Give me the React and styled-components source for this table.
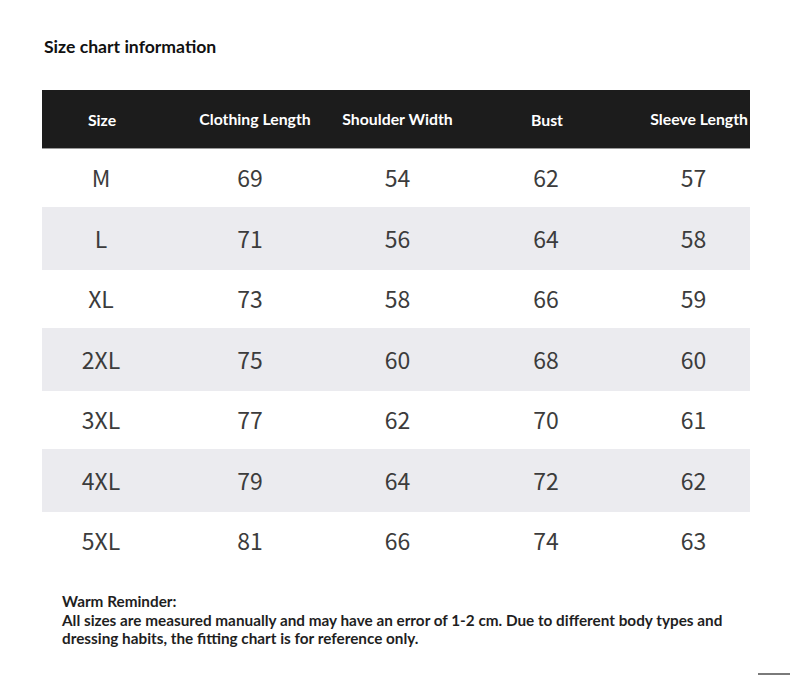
import React from 'react';
import styled, { createGlobalStyle } from 'styled-components';

const GlobalStyle = createGlobalStyle`
  html, body {
    margin: 0;
    padding: 0;
    background: #fff;
  }
  body {
    font-family: Lato, "Liberation Sans", sans-serif;
  }
`;

const Page = styled.div`
  width: 790px;
  height: 675px;
  position: relative;
  overflow: hidden;
  background: #fff;
  display: flex;
  flex-direction: column;
  padding: 37px 0 0 42px;
  box-sizing: border-box;
`;

const Title = styled.h1`
  margin: 0 0 0 2px;
  font-family: Lato, "Liberation Sans", sans-serif;
  font-weight: 700;
  font-size: 17.6px;
  line-height: 20px;
  color: #111;
`;

const Table = styled.div`
  margin-top: 33px;
  width: 708px;
  display: grid;
  grid-template-columns: 118px 180px 115px 182px 113px;
`;

const HeadCell = styled.div`
  height: 59px;
  background: #1c1c1c;
  color: #fff;
  display: flex;
  align-items: center;
  justify-content: ${p => (p.$align === 'right' ? 'flex-end' : 'center')};
  padding: ${p => (p.$low ? '0' : '0 0 2px 0')};
  padding-left: ${p => p.$shift || 0}px;
  padding-right: ${p => (p.$align === 'right' ? 2 : 0)}px;
  box-sizing: border-box;
  font-family: Lato, "Liberation Sans", sans-serif;
  font-weight: 700;
  font-size: 15.8px;
  white-space: nowrap;
  border-bottom: 1px solid #9a9a9a;
`;

const Cell = styled.div`
  height: ${p => (p.$shade ? '63px' : '58px')};
  background: ${p => (p.$shade ? '#ebebef' : '#fff')};
  display: flex;
  align-items: center;
  justify-content: center;
  padding-bottom: 2px;
  box-sizing: border-box;
  font-family: "Noto Sans CJK SC", "Noto Sans", sans-serif;
  font-weight: 400;
  font-size: 23px;
  color: #3c3c3c;
`;

const Reminder = styled.div`
  margin: 22px 0 0 20px;
  width: 690px;
  font-family: Lato, "Liberation Sans", sans-serif;
  font-weight: 700;
  font-size: 15.3px;
  line-height: 18px;
  color: #1f1f1f;
`;

const ReminderTitle = styled.div`
  margin-bottom: 1px;
`;

const Corner = styled.div`
  position: absolute;
  right: 0;
  bottom: 0;
  width: 32px;
  height: 2px;
  background: #7a7a7a;
`;

const headers = [
  { label: 'Size', shift: 2, low: true },
  { label: 'Clothing Length', shift: 10 },
  { label: 'Shoulder Width', shift: 0 },
  { label: 'Bust', shift: 2, low: true },
  { label: 'Sleeve Length', align: 'right' },
];

const rows = [
  ['M', 69, 54, 62, 57],
  ['L', 71, 56, 64, 58],
  ['XL', 73, 58, 66, 59],
  ['2XL', 75, 60, 68, 60],
  ['3XL', 77, 62, 70, 61],
  ['4XL', 79, 64, 72, 62],
  ['5XL', 81, 66, 74, 63],
];

export default function App() {
  return (
    <>
      <GlobalStyle />
      <Page>
        <Title>Size chart information</Title>
        <Table>
          {headers.map(h => (
            <HeadCell key={h.label} $align={h.align} $low={h.low} $shift={h.shift}>
              {h.label}
            </HeadCell>
          ))}
          {rows.map((r, ri) =>
            r.map((v, ci) => (
              <Cell key={ri + '-' + ci} $shade={ri % 2 === 1}>
                {v}
              </Cell>
            ))
          )}
        </Table>
        <Reminder>
          <ReminderTitle>Warm Reminder:</ReminderTitle>
          All sizes are measured manually and may have an error of 1-2 cm. Due to different body types and
          dressing habits, the fitting chart is for reference only.
        </Reminder>
        <Corner />
      </Page>
    </>
  );
}
